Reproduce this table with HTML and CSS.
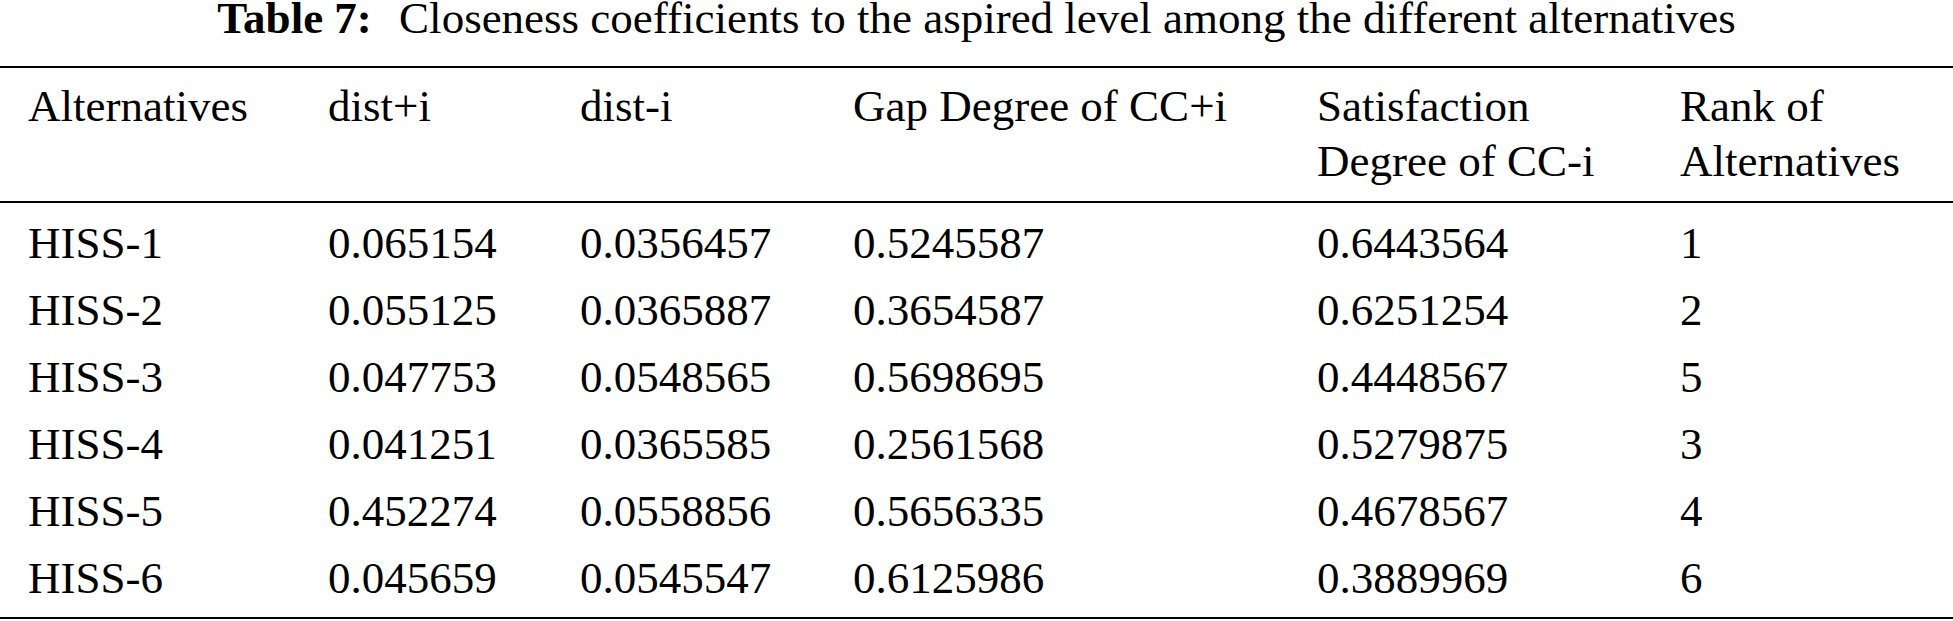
FILE: index.html
```html
<!DOCTYPE html>
<html lang="en">
<head>
    <meta charset="UTF-8">
    <meta name="viewport" content="width=device-width, initial-scale=1.0">
    <title>Table 7</title>
    <link rel="stylesheet" href="styles.css">
</head>
<body>

    <div class="table-wrap">
        <p class="caption"><span class="caption-label">Table 7:</span> Closeness coefficients to the aspired level among the different alternatives</p>

        <table class="results">
            <colgroup>
                <col class="c-alt">
                <col class="c-dplus">
                <col class="c-dminus">
                <col class="c-gap">
                <col class="c-sat">
                <col class="c-rank">
            </colgroup>
            <thead>
                <tr>
                    <th>Alternatives</th>
                    <th>dist+i</th>
                    <th>dist-i</th>
                    <th>Gap Degree of CC+i</th>
                    <th>Satisfaction<br>Degree of CC-i</th>
                    <th>Rank of<br>Alternatives</th>
                </tr>
            </thead>
            <tbody>
                <tr>
                    <td>HISS-1</td>
                    <td>0.065154</td>
                    <td>0.0356457</td>
                    <td>0.5245587</td>
                    <td>0.6443564</td>
                    <td>1</td>
                </tr>
                <tr>
                    <td>HISS-2</td>
                    <td>0.055125</td>
                    <td>0.0365887</td>
                    <td>0.3654587</td>
                    <td>0.6251254</td>
                    <td>2</td>
                </tr>
                <tr>
                    <td>HISS-3</td>
                    <td>0.047753</td>
                    <td>0.0548565</td>
                    <td>0.5698695</td>
                    <td>0.4448567</td>
                    <td>5</td>
                </tr>
                <tr>
                    <td>HISS-4</td>
                    <td>0.041251</td>
                    <td>0.0365585</td>
                    <td>0.2561568</td>
                    <td>0.5279875</td>
                    <td>3</td>
                </tr>
                <tr>
                    <td>HISS-5</td>
                    <td>0.452274</td>
                    <td>0.0558856</td>
                    <td>0.5656335</td>
                    <td>0.4678567</td>
                    <td>4</td>
                </tr>
                <tr>
                    <td>HISS-6</td>
                    <td>0.045659</td>
                    <td>0.0545547</td>
                    <td>0.6125986</td>
                    <td>0.3889969</td>
                    <td>6</td>
                </tr>
            </tbody>
        </table>
    </div>

</body>
</html>
```

FILE: styles.css
```css
/* Reset default styles */
* {
    margin: 0;
    padding: 0;
    box-sizing: border-box;
}

body {
    font-family: "Liberation Serif", "Times New Roman", serif;
    font-size: 45px;
    color: #000;
    background-color: #fff;
}

.table-wrap {
    width: 100%;
}

.caption {
    text-align: center;
    line-height: 36px;
    height: 36px;
    margin-bottom: 30px;
    white-space: nowrap;
}

.caption-label {
    font-weight: bold;
    margin-right: 16px;
}

.results {
    width: 100%;
    table-layout: fixed;
    border-collapse: separate;
    border-spacing: 0;
}

.c-alt { width: 300px; }
.c-dplus { width: 252px; }
.c-dminus { width: 273px; }
.c-gap { width: 464px; }
.c-sat { width: 363px; }
.c-rank { width: 301px; }

.results th,
.results td {
    text-align: left;
    vertical-align: top;
    font-weight: normal;
    line-height: 55px;
    padding: 6px 0 6px 28px;
    white-space: nowrap;
}

.results th {
    padding-top: 11px;
    padding-bottom: 12px;
    border-top: 2px solid #000;
    border-bottom: 2px solid #000;
}

.results tbody tr:first-child td {
    padding-top: 13px;
}

.results tbody tr:last-child td {
    padding-bottom: 11px;
    border-bottom: 2px solid #000;
}
```
